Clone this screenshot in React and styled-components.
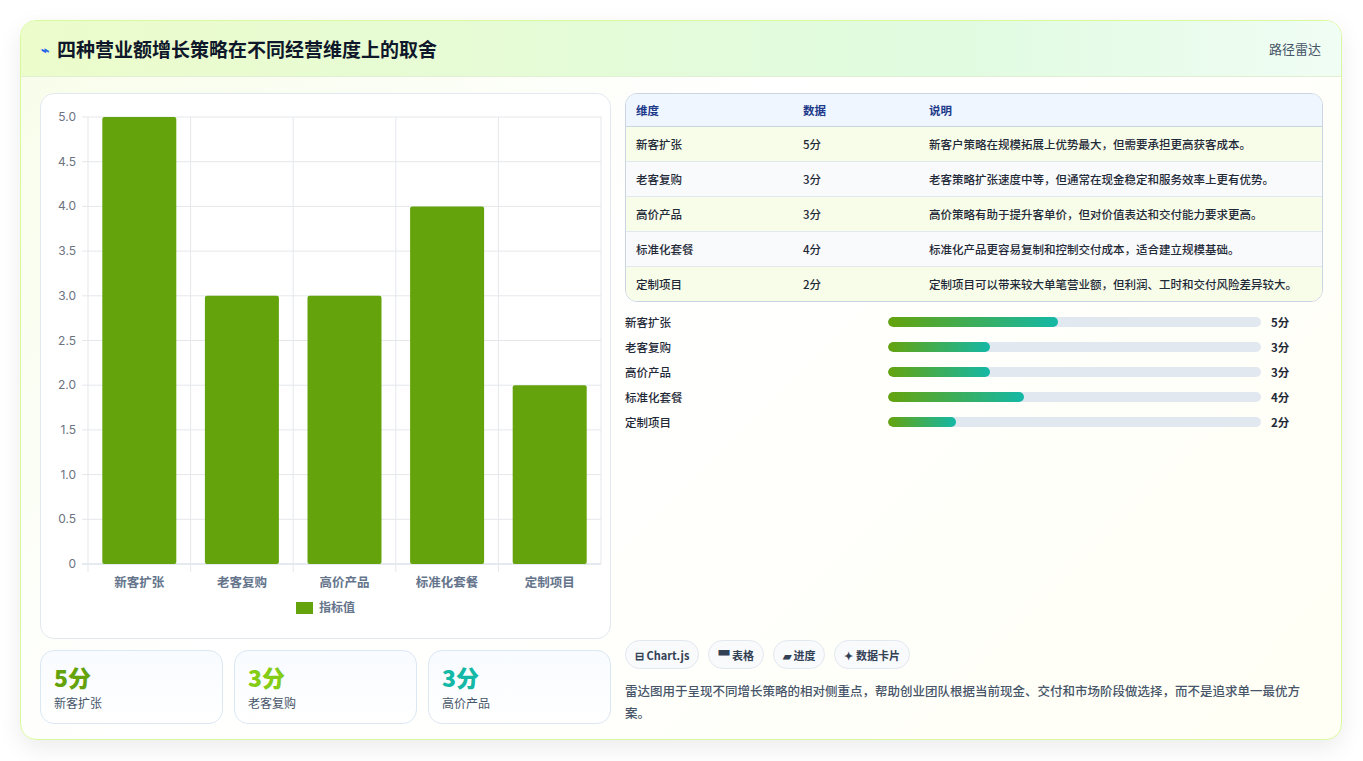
import React from 'react';
import styled, { createGlobalStyle } from 'styled-components';

const GlobalStyle = createGlobalStyle`
  body {
    margin: 0;
    background: #ffffff;
    font-family: Inter, "Noto Sans CJK SC", sans-serif;
  }
`;

const ROWS = [
  { name: '新客扩张', value: 5, desc: '新客户策略在规模拓展上优势最大，但需要承担更高获客成本。' },
  { name: '老客复购', value: 3, desc: '老客策略扩张速度中等，但通常在现金稳定和服务效率上更有优势。' },
  { name: '高价产品', value: 3, desc: '高价策略有助于提升客单价，但对价值表达和交付能力要求更高。' },
  { name: '标准化套餐', value: 4, desc: '标准化产品更容易复制和控制交付成本，适合建立规模基础。' },
  { name: '定制项目', value: 2, desc: '定制项目可以带来较大单笔营业额，但利润、工时和交付风险差异较大。' },
];

const STATS = [
  { value: '5分', label: '新客扩张', color: '#65a30d' },
  { value: '3分', label: '老客复购', color: '#84cc16' },
  { value: '3分', label: '高价产品', color: '#14b8a6' },
];

function BarChart() {
  // plot area in svg coords
  const left = 47, right = 560, top = 23, bottom = 470;
  const ticks = [0, 0.5, 1, 1.5, 2, 2.5, 3, 3.5, 4, 4.5, 5];
  const slot = (right - left) / ROWS.length;
  const y = (v) => bottom - (v / 5) * (bottom - top);
  return (
    <svg width="570" height="544" viewBox="0 0 570 544">
      {ticks.map((t) => (
        <g key={t}>
          <line x1={left - 6} x2={right} y1={y(t)} y2={y(t)} stroke={t === 0 ? '#cbd5e1' : '#e5e7eb'} />
          <text x={left - 12} y={y(t) + 4} textAnchor="end" fontSize="12" fill="#6b7280" fontFamily="Inter, sans-serif">
            {t === 0 ? '0' : t.toFixed(1)}
          </text>
        </g>
      ))}
      {ROWS.map((r, i) => (
        <line key={'v' + i} x1={left + slot * i} x2={left + slot * i} y1={top} y2={bottom + 8} stroke="#e5e7eb" />
      ))}
      <line x1={right} x2={right} y1={top} y2={bottom} stroke="#e5e7eb" />
      {ROWS.map((r, i) => {
        const cx = left + slot * i + slot / 2;
        return (
          <g key={r.name}>
            <rect x={cx - 37} y={y(r.value)} width="74" height={bottom - y(r.value)} rx="2" fill="#65a30d" />
            <text x={cx} y={bottom + 23} textAnchor="middle" fontSize="12.5" fontWeight="600" fill="#64748b" fontFamily="'Noto Sans CJK SC', sans-serif">
              {r.name}
            </text>
          </g>
        );
      })}
      <rect x="255" y="508" width="17" height="12" fill="#65a30d" />
      <text x="278" y="518" fontSize="12" fontWeight="600" fill="#64748b" fontFamily="'Noto Sans CJK SC', sans-serif">指标值</text>
    </svg>
  );
}

export default function App() {
  return (
    <Page>
      <GlobalStyle />
      <Card>
        <Header>
          <Title><Spark>⌁</Spark>四种营业额增长策略在不同经营维度上的取舍</Title>
          <Tag>路径雷达</Tag>
        </Header>
        <Body>
          <LeftCol>
            <ChartBox><BarChart /></ChartBox>
            <StatRow>
              {STATS.map((s) => (
                <Stat key={s.label}>
                  <StatValue $color={s.color}>{s.value}</StatValue>
                  <StatLabel>{s.label}</StatLabel>
                </Stat>
              ))}
            </StatRow>
          </LeftCol>
          <RightCol>
            <Table>
              <thead>
                <tr><Th>维度</Th><Th>数据</Th><Th>说明</Th></tr>
              </thead>
              <tbody>
                {ROWS.map((r, i) => (
                  <Tr key={r.name} $odd={i % 2 === 1}>
                    <Td>{r.name}</Td><Td>{r.value}分</Td><Td>{r.desc}</Td>
                  </Tr>
                ))}
              </tbody>
            </Table>
            <Bars>
              {ROWS.map((r) => (
                <BarRow key={r.name}>
                  <BarLabel>{r.name}</BarLabel>
                  <Track><Fill style={{ width: `${r.value * 9.1}%` }} /></Track>
                  <BarValue>{r.value}分</BarValue>
                </BarRow>
              ))}
            </Bars>
            <Pills>
              <Pill>⊟ Chart.js</Pill>
              <Pill>▀ 表格</Pill>
              <Pill>▰ 进度</Pill>
              <Pill>✦ 数据卡片</Pill>
            </Pills>
            <Note>雷达图用于呈现不同增长策略的相对侧重点，帮助创业团队根据当前现金、交付和市场阶段做选择，而不是追求单一最优方案。</Note>
          </RightCol>
        </Body>
      </Card>
    </Page>
  );
}

const Page = styled.div`
  padding: 20px 21px 21px 20px;
`;

const Card = styled.div`
  height: 720px;
  box-sizing: border-box;
  border: 1px solid #d9f99d;
  border-radius: 16px;
  background: linear-gradient(135deg, #f7fde9 0%, #ffffff 40%, #fffff5 100%);
  box-shadow: 0 8px 24px rgba(0, 0, 0, 0.08);
  overflow: hidden;
  display: flex;
  flex-direction: column;
`;

const Header = styled.div`
  height: 55px;
  flex-shrink: 0;
  display: flex;
  align-items: center;
  justify-content: space-between;
  padding: 0 20px;
  background: linear-gradient(90deg, #ecfccb 0%, #e0fbe0 70%, #f0fdf4 100%);
  border-bottom: 1px solid #e2efd5;
`;

const Title = styled.h1`
  margin: 0;
  font-size: 19px;
  font-weight: 700;
  color: #0f172a;
  display: flex;
  align-items: center;
  gap: 8px;
  font-family: "Noto Sans CJK SC", sans-serif;
`;

const Spark = styled.span`
  color: #2563eb;
  font-size: 14px;
`;

const Tag = styled.span`
  font-size: 13px;
  color: #475569;
  font-family: "Noto Sans CJK SC", sans-serif;
`;

const Body = styled.div`
  flex: 1;
  display: grid;
  grid-template-columns: 571px 1fr;
  gap: 14px;
  padding: 16px 18px 18px 19px;
  min-height: 0;
`;

const LeftCol = styled.div`
  display: flex;
  flex-direction: column;
  gap: 11px;
`;

const ChartBox = styled.div`
  height: 544px;
  border: 1px solid #e2e8f0;
  border-radius: 14px;
  background: #fff;
  overflow: hidden;
`;

const StatRow = styled.div`
  display: grid;
  grid-template-columns: repeat(3, 1fr);
  gap: 11px;
`;

const Stat = styled.div`
  height: 74px;
  box-sizing: border-box;
  border: 1px solid #dbe7f3;
  border-radius: 14px;
  background: linear-gradient(180deg, #f8fbff, #ffffff);
  padding: 10px 13px;
  font-family: "Noto Sans CJK SC", sans-serif;
`;

const StatValue = styled.div`
  font-size: 23px;
  font-weight: 800;
  color: ${(p) => p.$color};
  line-height: 32px;
`;

const StatLabel = styled.div`
  font-size: 12px;
  color: #475569;
  margin-top: 1px;
`;

const RightCol = styled.div`
  display: flex;
  flex-direction: column;
  font-family: "Noto Sans CJK SC", sans-serif;
`;

const Table = styled.table`
  width: 100%;
  border-collapse: separate;
  border-spacing: 0;
  border: 1px solid #cbd5e1;
  border-radius: 12px;
  overflow: hidden;
  font-size: 11.5px;
`;

const Th = styled.th`
  text-align: left;
  height: 32px;
  padding: 0 10px;
  background: #eff6ff;
  color: #1e3a8a;
  font-weight: 600;
  border-bottom: 1px solid #cbd5e1;
  &:nth-child(1) { width: 147px; }
  &:nth-child(2) { width: 106px; }
`;

const Tr = styled.tr`
  background: ${(p) => (p.$odd ? '#f8fafc' : '#f7fde9')};
  &:not(:last-child) td { border-bottom: 1px solid #e2e8f0; }
`;

const Td = styled.td`
  height: 34px;
  padding: 0 10px;
  color: #1f2937;
  font-weight: 500;
`;

const Bars = styled.div`
  margin-top: 12px;
  display: flex;
  flex-direction: column;
  gap: 9px;
`;

const BarRow = styled.div`
  display: grid;
  grid-template-columns: 263px 1fr 62px;
  align-items: center;
  height: 16px;
`;

const BarLabel = styled.span`
  font-size: 11.5px;
  color: #1f2937;
  font-weight: 500;
`;

const Track = styled.div`
  height: 10px;
  border-radius: 5px;
  background: #e2e8f0;
  overflow: hidden;
`;

const Fill = styled.div`
  height: 100%;
  border-radius: 5px;
  background: linear-gradient(90deg, #65a30d, #14b8a6);
`;

const BarValue = styled.span`
  font-size: 11.5px;
  font-weight: 700;
  color: #1f2937;
  padding-left: 10px;
`;

const Pills = styled.div`
  margin-top: auto;
  display: flex;
  gap: 9px;
`;

const Pill = styled.span`
  height: 29px;
  box-sizing: border-box;
  display: inline-flex;
  align-items: center;
  padding: 0 9px;
  border: 1px solid #e2e8f0;
  border-radius: 15px;
  background: #f8fafc;
  font-size: 11px;
  font-weight: 600;
  color: #334155;
`;

const Note = styled.p`
  margin: 11px 0 0;
  font-size: 12.5px;
  line-height: 22px;
  color: #475569;
  font-weight: 500;
`;
